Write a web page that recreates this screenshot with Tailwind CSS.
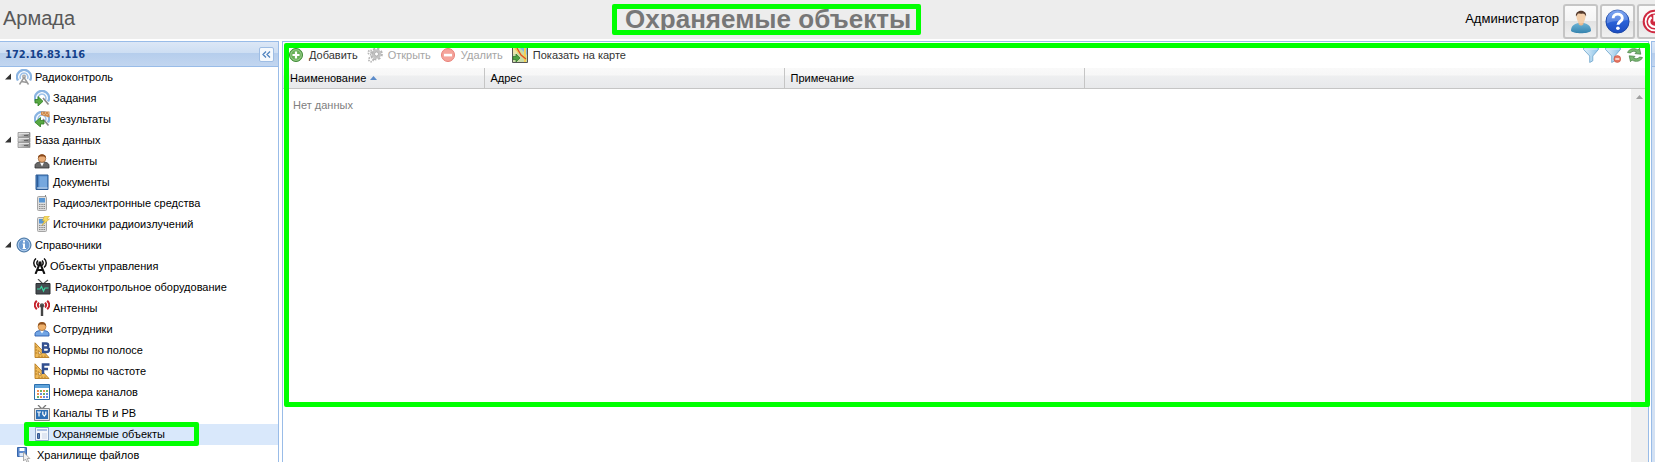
<!DOCTYPE html>
<html lang="ru">
<head>
<meta charset="utf-8">
<title>Армада</title>
<script src="https://cdn.jsdelivr.net/npm/@tailwindcss/browser@4"></script>
</head>
<body class="relative flex h-screen flex-col overflow-hidden bg-white font-['Liberation_Sans',Arial,sans-serif] text-[11px] leading-[14px] text-black">

<svg class="absolute size-0" aria-hidden="true" xmlns="http://www.w3.org/2000/svg">
  <defs>
    <linearGradient id="gHelp" x1="0" y1="0" x2="0" y2="1"><stop offset="0" stop-color="#5a8ff0"/><stop offset=".5" stop-color="#2a62d8"/><stop offset="1" stop-color="#1c4cc0"/></linearGradient>
    <linearGradient id="gShirt" x1="0" y1="0" x2="0" y2="1"><stop offset="0" stop-color="#6db4d6"/><stop offset="1" stop-color="#3583ae"/></linearGradient>
    <linearGradient id="gGray" x1="0" y1="0" x2="1" y2="0"><stop offset="0" stop-color="#d8d8d8"/><stop offset="1" stop-color="#858585"/></linearGradient>
    <linearGradient id="gFun" x1="0" y1="0" x2="1" y2="0"><stop offset="0" stop-color="#e3f1fa"/><stop offset="1" stop-color="#8cc3e8"/></linearGradient>
  </defs>
  <symbol id="waves" viewBox="0 0 16 16"><g fill="none"><path d="M2 11.500A7 7 0 1 1 14 11.500" stroke="#8ab4e2" stroke-width="2.400"/><path d="M4.500 10A4 4 0 1 1 11.500 10" stroke="#9fc3ea" stroke-width="1.600"/></g></symbol>
  <symbol id="radio" viewBox="0 0 16 16"><use href="#waves"/><circle cx="8" cy="7.500" r="1.700" fill="#bbb" stroke="#888" stroke-width=".5"/><path d="M8 8.500L3.500 15.500M8 8.500L12.500 15.500M5.500 12.500L11 13.500" stroke="#999" stroke-width="1.400" fill="none"/></symbol>
  <symbol id="task" viewBox="0 0 16 16"><use href="#waves"/><path d="M9 8l5.500 6.500" stroke="#888" stroke-width="1.600"/><path d="M1 9.500h3V6.500l5 4.800L4 16v-3H1z" fill="#58a843" stroke="#2f7d22" stroke-width=".8"/></symbol>
  <symbol id="result" viewBox="0 0 16 16"><use href="#waves"/><path d="M7 .5h8.500v6L7 4z" fill="#cf8a4c"/><path d="M8 1.500h1v1H8zm3 0h1v1h-1zm3 0h1v1h-1zM9.500 3h1v1h-1zm3 0h1v1h-1z" fill="#f5d3ac"/><path d="M9 8l5.500 6.500" stroke="#888" stroke-width="1.600"/><path d="M10 9.500H6.500V6.500L1 11.300 6.500 16v-3H10z" fill="#58a843" stroke="#2f7d22" stroke-width=".8"/></symbol>
  <symbol id="db" viewBox="0 0 16 16"><path d="M2 .5h12v4.500H2zM2 5.500h12v4.500H2zM2 10.500h12v5H2z" fill="url(#gGray)" stroke="#8a8a8a" stroke-width=".7"/><path d="M3 1.500h10M3 6.500h10M3 11.500h10" stroke="#e2e2e2"/><path d="M8 3.500h4M8 8.500h4M8 13.500h4" stroke="#666"/></symbol>
  <symbol id="client" viewBox="0 0 16 16"><path d="M1 15v-2.500C1 10 4 9 8 9s7 1 7 3.500V15z" fill="#686868" stroke="#333" stroke-width=".8"/><path d="M6 9.500l2 4 2-4z" fill="#fff"/><circle cx="8" cy="5.500" r="3.800" fill="#e9ad78" stroke="#8a5020" stroke-width=".6"/><path d="M4 5C3.500 0 12.500 0 12 5L10 3.500H6z" fill="#8a4a1c"/></symbol>
  <symbol id="staff" viewBox="0 0 16 16"><path d="M1 15v-2C1 10.500 4 9.500 8 9.500s7 1 7 3.500v2z" fill="#72a5e4" stroke="#2d5fae" stroke-width=".9"/><path d="M6 9.500l2 3 2-3z" fill="#fff"/><circle cx="8" cy="5.500" r="4" fill="#eeb06a" stroke="#a86524" stroke-width=".6"/><path d="M4 5C3.300-.3 12.700-.3 12 5L10 3.500H6z" fill="#8e511f"/></symbol>
  <symbol id="book" viewBox="0 0 16 16"><path d="M2 1h12v14.500H2z" fill="#5b91cf" stroke="#2b5a94"/><path d="M3.500 1v14" stroke="#2d5c98" stroke-width="1.500"/><path d="M5.500 2.500H13V13H5.500z" fill="#76a8de"/><path d="M3 14h10.500" stroke="#dce8f4"/></symbol>
  <symbol id="phone" viewBox="0 0 16 16"><rect x="3.500" y="1.500" width="9" height="14" rx="1" fill="#ddd" stroke="#a5a5a5"/><path d="M11.500 0v2" stroke="#888"/><path d="M5 3h6v4.500H5z" fill="#5796d4"/><path d="M5 9h1.500v1H5zm2.300 0h1.500v1H7.300zm2.200 0H11v1H9.500zM5 11h1.500v1H5zm2.300 0h1.500v1H7.300zm2.200 0H11v1H9.500zM5 13h1.500v1H5zm2.300 0h1.500v1H7.300zm2.200 0H11v1H9.500z" fill="#8a8a8a"/></symbol>
  <symbol id="phonez" viewBox="0 0 16 16"><use href="#phone"/><path d="M10.500 0h5L13 3h2.500L8 9.500l2.500-4.800H8.500z" fill="#f6db63" stroke="#caa32c" stroke-width=".5"/></symbol>
  <symbol id="info" viewBox="0 0 16 16"><circle cx="8" cy="8" r="7" fill="#6c9bd2" stroke="#43719f"/><circle cx="8" cy="8" r="5.800" fill="none" stroke="#c5daf1" stroke-width=".8"/><path d="M7 3.500h2v2H7zM6.500 6.500H9V11h1v1H6.500v-1H7V7.500h-.5z" fill="#fff"/></symbol>
  <symbol id="tower" viewBox="0 0 14 16"><g fill="none" stroke="#111" stroke-width="1.500"><path d="M3 .5C0 3 0 7 3 9.500M11 .5c3 2.500 3 6.500 0 9M5 2.500c-1.400 1.500-1.400 3.500 0 5M9 2.500c1.400 1.500 1.400 3.500 0 5"/><path d="M7 5L2.500 16M7 5l4.500 11M4.500 12h5" stroke-width="2"/></g><circle cx="7" cy="5" r="1.700" fill="#111"/></symbol>
  <symbol id="scope" viewBox="0 0 16 16"><path d="M3 0l5 5 5-4" stroke="#555" fill="none" stroke-width="1.200"/><path d="M1 4.500h14V15H1z" fill="#454b50" stroke="#2c3033"/><path d="M2 10h3l1.500-2.500L8.500 12 10 9h3.500" fill="none" stroke="#3cd5a0" stroke-width="1.200"/></symbol>
  <symbol id="ant" viewBox="0 0 16 16"><path d="M2.800.8C0 3.500 0 6.500 2.800 9.200M13.200.8c2.800 2.700 2.800 5.700 0 8.400M5 2.600c-1.500 1.600-1.500 3.300 0 4.900M11 2.600c1.500 1.600 1.500 3.300 0 4.900" fill="none" stroke="#c5232c" stroke-width="2"/><circle cx="8" cy="5.500" r="2.200" fill="#555"/><path d="M8 5v11" stroke="#444" stroke-width="2.400"/></symbol>
  <symbol id="ruler" viewBox="0 0 16 16"><path fill-rule="evenodd" d="M1 .8l14 14.700H1zM4.300 8.500V12h3.400z" fill="#f0ba58" stroke="#b57b20" stroke-width=".9"/><path d="M1.500 5H3M1.500 8H3M1.500 11H3M5 15v-1.500M8 15v-1.500M11 15v-1.500" stroke="#8f5c10" stroke-width=".7"/></symbol>
  <symbol id="normb" viewBox="0 0 16 16"><use href="#ruler"/><path d="M9 1.500h3.200a1.800 1.800 0 0 1 0 4H9zM9 5.500h3.800a2 2 0 0 1 0 4.500H9z" fill="none" stroke="#324f8f" stroke-width="2.300"/></symbol>
  <symbol id="normf" viewBox="0 0 16 16"><use href="#ruler"/><path d="M9 11V1.500h6.500M9 6h5" fill="none" stroke="#324f8f" stroke-width="2.600"/></symbol>
  <symbol id="cal" viewBox="0 0 16 16"><path d="M.5.500h15v15H.5z" fill="#fff" stroke="#2b6fae"/><path d="M1 1h14v3H1z" fill="#5fa3da"/><path d="M3 6h2v2H3zm6 0h2v2H9zM3 9h2v2H3zm3 3h2v2H6z" fill="#ee8d50"/><path d="M6 6h2v2H6zm6 0h2v2h-2zM9 9h2v2H9zM3 12h2v2H3z" fill="#6fb062"/><path d="M6 9h2v2H6zm6 0h2v2h-2zM9 12h2v2H9zm3 0h2v2h-2z" fill="#6c8be0"/></symbol>
  <symbol id="tv" viewBox="0 0 16 16"><path d="M4 0l4 4 4-4" stroke="#777" fill="none" stroke-width="1.300"/><path d="M.5 3.500h15v12H.5z" fill="#e5e5e5" stroke="#888"/><path d="M2 5h12v9H2z" fill="#2d70b6"/><path d="M3 7h4M5 7v4.500M8.800 6.500v2.800L10.300 11l1.500-1.700V6.500" stroke="#fff" stroke-width="1.200" fill="none"/></symbol>
  <symbol id="form" viewBox="0 0 16 16"><path d="M1.500 1.500h13v13h-13z" fill="#f4f7fb" stroke="#8ba4c8"/><path d="M3 3h10v2H3z" fill="#a9bfe2"/><path d="M3.500 7.500h2v5h-2z" fill="#5c82bc" stroke="#35568e"/><path d="M8 7h5v6H8z" fill="#dfe6f2"/></symbol>
  <symbol id="disk" viewBox="0 0 16 16"><path d="M.5.500h9v9h-9z" fill="#5c8ace" stroke="#3666ab"/><path d="M2.500 1h5v3h-5z" fill="#fff"/><path d="M2.500 6h5v3.500h-5z" fill="#dfe9f6"/><path d="M6.500 5v9l2-2 1.500 3.500 1.700-.8-1.500-3.200h2.600z" fill="#f0f0f0" stroke="#999" stroke-width=".8"/></symbol>
  <symbol id="add" viewBox="0 0 16 16"><circle cx="8" cy="8" r="6.500" fill="#68b057" stroke="#3f8a36"/><circle cx="8" cy="8" r="5.300" fill="none" stroke="#a5d49a" stroke-width=".8"/><path d="M8 4.500v7M4.500 8h7" stroke="#fff" stroke-width="2.200"/></symbol>
  <symbol id="gear" viewBox="0 0 16 16"><g fill="none" stroke="#b5b5b5"><circle cx="9.500" cy="7" r="5.300" stroke-width="2.200" stroke-dasharray="2.200 1.960"/><circle cx="9.500" cy="7" r="3.400" stroke="#c4c4c4" stroke-width="2.800"/><circle cx="9.500" cy="7" r="2" stroke="#a0a0a0" stroke-width=".7"/><circle cx="3.500" cy="5.500" r="2.200" stroke-width="1.800" stroke-dasharray="1.400 .9"/><circle cx="4" cy="12.500" r="2.200" stroke-width="1.800" stroke-dasharray="1.400 .9"/></g></symbol>
  <symbol id="del" viewBox="0 0 16 16"><circle cx="8" cy="8" r="6.500" fill="#f5a49b" stroke="#e98078"/><path d="M4 6.800h8v2.600H4z" fill="#fff"/></symbol>
  <symbol id="map" viewBox="0 0 16 16"><path d="M.5.500h15v15H.5z" fill="#c9dba8" stroke="#555"/><path d="M8 1h7v7z" fill="#86b8e4"/><path d="M1 1h4v6H1z" fill="#e9e5a8"/><path d="M3 1l11 12M13 1v14" stroke="#f5cf55" stroke-width="2"/><path d="M5 1l4 7 5 4" stroke="#d94a2c" fill="none" stroke-width="1.200"/><path d="M1 9.500h3V7L8 11l-4 4v-2.500H1z" fill="#4ca040" stroke="#2c7526" stroke-width=".7"/></symbol>
  <symbol id="filter" viewBox="0 0 16 16"><path d="M.6.800h14.800v1.700L9.800 9v4.800L6.700 15.500V9L.6 2.500z" fill="url(#gFun)" stroke="#69a3cc" stroke-width=".8"/><path d="M1.500 2h13" stroke="#d9ebf7" stroke-width="1.200"/></symbol>
  <symbol id="unfilter" viewBox="0 0 16 16"><use href="#filter"/><circle cx="12.300" cy="12" r="3.400" fill="#e67864" stroke="#c44e3c" stroke-width=".6"/><path d="M10.300 12h4" stroke="#fff" stroke-width="1.300"/></symbol>
  <symbol id="refresh" viewBox="0 0 16 16"><g fill="#79b871" stroke="#3e7a3c" stroke-width=".7"><path d="M.6 5.500C2 1.500 7.500.6 11 3l1.500-1.700 1.300 5.900-5.800-.6 1.500-1.600C7.500 3.800 4.500 4 3.500 6z"/><path d="M15.400 10.500C14 14.500 8.500 15.400 5 13l-1.500 1.700L2.200 8.800l5.800.6L6.500 11c2 1.200 5 1 6-1z"/></g></symbol>
</svg>

<header class="flex h-[39px] shrink-0 items-start bg-[#ededed] pl-[3px]">
  <div class="pt-[6px] text-[20px] leading-6 text-[#585858]">Армада</div>
  <h1 class="flex-1 pt-1 pr-1 text-center text-[26px] leading-[30px] font-bold text-[#777]">Охраняемые объекты</h1>
  <div class="pt-[10px] pr-1 text-[13px] leading-[18px]">Администратор</div>
  <div class="flex w-[92px] shrink-0 gap-[2px] overflow-hidden pt-1">
    <button aria-label="Профиль" class="flex size-[35px] shrink-0 items-center justify-center rounded-[3px] border-2 border-[#c5c5c5] bg-[linear-gradient(#fbfbfb_0%,#f4f4f4_48%,#e3e3e3_50%,#f0f0f0_100%)]">
      <svg class="h-6 w-[22px] shrink-0" viewBox="0 0 22 24"><path d="M1 21c0-5 3-7 7-8h6c4 1 7 3 7 8-3 3-17 3-20 0z" fill="url(#gShirt)"/><path d="M8.500 11h5v3c-1.500 2-3.500 2-5 0z" fill="#e8b98f"/><path d="M6.500 6c0-5 9-5 9 0 0 4-2 7.500-4.500 7.500S6.500 10 6.500 6z" fill="#f3cfab"/><path d="M6 6.500C4.500-1 17.500-1.500 16 6.500c-1-2-1-2.500-3-3-2 .5-4 0-5 0z" fill="#553a2c"/></svg>
    </button>
    <button aria-label="Справка" class="flex size-[35px] shrink-0 items-center justify-center rounded-[3px] border-2 border-[#c5c5c5] bg-[linear-gradient(#fbfbfb_0%,#f4f4f4_48%,#e3e3e3_50%,#f0f0f0_100%)]">
      <svg class="size-[25px] shrink-0" viewBox="0 0 26 26"><circle cx="13" cy="13" r="12" fill="url(#gHelp)" stroke="#1d49a8"/><path d="M2 11a11 11 0 0 1 22 0c-6 3-14 0-22 4z" fill="#fff" opacity=".22"/><path d="M8.500 9.500c0-5.500 9.500-5.500 9.500 0 0 3.500-4.500 3.500-4.500 7" fill="none" stroke="#fff" stroke-width="3"/><circle cx="13.400" cy="20" r="1.900" fill="#fff"/></svg>
    </button>
    <button aria-label="Выход" class="flex size-[35px] shrink-0 items-center justify-center rounded-[3px] border-2 border-[#c5c5c5] bg-[linear-gradient(#fbfbfb_0%,#f4f4f4_48%,#e3e3e3_50%,#f0f0f0_100%)]">
      <svg class="size-[25px] shrink-0" viewBox="0 0 26 26"><circle cx="13" cy="13" r="12.300" fill="#cf2940"/><circle cx="13" cy="13" r="9.300" fill="none" stroke="#fff" stroke-width="1.800"/><path d="M10 8.500a5.500 5.500 0 1 0 6 0M13 6v7" fill="none" stroke="#fff" stroke-width="2.400"/></svg>
    </button>
  </div>
</header>

<div class="mt-[2px] flex min-h-0 flex-1 gap-[3px]">
  <aside class="flex w-[279px] shrink-0 flex-col border-t border-r border-[#99bce8]">
    <div class="flex h-[25px] shrink-0 items-center justify-between border-b border-[#99bce8] bg-[linear-gradient(#dce7f6_0%,#cddef3_45%,#b5cdec_46%,#c2d6f0_100%)] pt-px pr-1 pl-[5px]">
      <h2 class="pt-px font-['DejaVu_Sans_Condensed','Noto_Sans',sans-serif] text-[11px] font-bold text-[#15428b]">172.16.83.116</h2>
      <button aria-label="Свернуть" class="flex size-[15px] items-center justify-center rounded-[2px] border border-[#9ebde4] bg-[#f5f9fd]">
        <svg class="h-[7px] w-[9px]" viewBox="0 0 9 7"><path d="M4 .5l-3 3 3 3M8 .5l-3 3 3 3" fill="none" stroke="#4f83bf" stroke-width="1.300"/></svg>
      </button>
    </div>
    <nav aria-label="Разделы">
      <ul class="[&_a]:flex [&_a]:h-[21px] [&_a]:items-center [&_a]:gap-[3px] [&_a]:pb-[2px] [&_svg]:shrink-0">
        <li><a href="#" class="pl-[5px]"><svg class="mr-px size-[7px]" viewBox="0 0 7 7"><path d="M6 .5v6H0z" fill="#333"/></svg><svg class="size-4"><use href="#radio"/></svg>Радиоконтроль</a></li>
        <li><a href="#" class="pl-[34px]"><svg class="size-4"><use href="#task"/></svg>Задания</a></li>
        <li><a href="#" class="pl-[34px]"><svg class="size-4"><use href="#result"/></svg>Результаты</a></li>
        <li><a href="#" class="pl-[5px]"><svg class="mr-px size-[7px]" viewBox="0 0 7 7"><path d="M6 .5v6H0z" fill="#333"/></svg><svg class="size-4"><use href="#db"/></svg>База данных</a></li>
        <li><a href="#" class="pl-[34px]"><svg class="size-4"><use href="#client"/></svg>Клиенты</a></li>
        <li><a href="#" class="pl-[34px]"><svg class="size-4"><use href="#book"/></svg>Документы</a></li>
        <li><a href="#" class="pl-[34px]"><svg class="size-4"><use href="#phone"/></svg>Радиоэлектронные средства</a></li>
        <li><a href="#" class="pl-[34px]"><svg class="size-4"><use href="#phonez"/></svg>Источники радиоизлучений</a></li>
        <li><a href="#" class="pl-[5px]"><svg class="mr-px size-[7px]" viewBox="0 0 7 7"><path d="M6 .5v6H0z" fill="#333"/></svg><svg class="size-4"><use href="#info"/></svg>Справочники</a></li>
        <li><a href="#" class="pl-[33px]"><svg class="h-4 w-[14px]"><use href="#tower"/></svg>Объекты управления</a></li>
        <li><a href="#" class="pl-[35px]"><svg class="mr-px size-4"><use href="#scope"/></svg>Радиоконтрольное оборудование</a></li>
        <li><a href="#" class="pl-[34px]"><svg class="size-4"><use href="#ant"/></svg>Антенны</a></li>
        <li><a href="#" class="pl-[34px]"><svg class="size-4"><use href="#staff"/></svg>Сотрудники</a></li>
        <li><a href="#" class="pl-[34px]"><svg class="size-4"><use href="#normb"/></svg>Нормы по полосе</a></li>
        <li><a href="#" class="pl-[34px]"><svg class="size-4"><use href="#normf"/></svg>Нормы по частоте</a></li>
        <li><a href="#" class="pl-[34px]"><svg class="size-4"><use href="#cal"/></svg>Номера каналов</a></li>
        <li><a href="#" class="pl-[34px]"><svg class="size-4"><use href="#tv"/></svg>Каналы ТВ и РВ</a></li>
        <li class="relative bg-[#d9e8fb]"><a href="#" aria-current="page" class="pl-[34px]"><svg class="size-4"><use href="#form"/></svg>Охраняемые объекты</a><span class="pointer-events-none absolute -top-[2px] left-6 h-6 w-[175px] rounded-[2px] border-[5px] border-[#00ff00]"></span></li>
        <li><a href="#" class="pl-[17px]"><svg class="mr-px size-4"><use href="#disk"/></svg>Хранилище файлов</a></li>
      </ul>
    </nav>
  </aside>

  <main class="relative flex min-w-0 flex-1 flex-col border-x border-t border-[#99bce8]">
    <div class="flex h-[26px] shrink-0 items-center pr-[5px] pl-[5px] text-[#333] [&_button]:flex [&_button]:items-center [&_button]:gap-[5px]">
      <button><svg class="size-4"><use href="#add"/></svg>Добавить</button>
      <button disabled class="ml-[9px] text-[#a5a5a5]"><svg class="size-4"><use href="#gear"/></svg>Открыть</button>
      <button disabled class="ml-[9px] text-[#a5a5a5]"><svg class="size-4"><use href="#del"/></svg>Удалить</button>
      <button class="ml-[9px]"><svg class="size-4"><use href="#map"/></svg>Показать на карте</button>
      <div class="ml-auto flex gap-[6px]">
        <button aria-label="Фильтр"><svg class="size-4"><use href="#filter"/></svg></button>
        <button aria-label="Сбросить фильтр"><svg class="size-4"><use href="#unfilter"/></svg></button>
        <button aria-label="Обновить"><svg class="size-4"><use href="#refresh"/></svg></button>
      </div>
    </div>
    <table class="w-full shrink-0 table-fixed border-collapse text-left">
      <thead>
        <tr class="h-5 bg-[linear-gradient(#f9f9f9_0%,#f7f7f7_35%,#eeeff0_40%,#e8e9eb_100%)] [&_th]:border-b [&_th]:border-[#c5c5c5] [&_th]:p-0 [&_th]:font-normal">
          <th scope="col" class="w-[201px] border-r"><span class="flex items-center gap-1 pl-[7px]">Наименование<svg class="h-1 w-[7px]" viewBox="0 0 7 4"><path d="M3.500 0L7 4H0z" fill="#5b8bc9"/></svg></span></th>
          <th scope="col" class="w-[300px] border-r"><span class="pl-[6px]">Адрес</span></th>
          <th scope="col" class="w-[300px] border-r"><span class="pl-[6px]">Примечание</span></th>
          <td class="border-b border-[#c5c5c5]"></td>
        </tr>
      </thead>
    </table>
    <div class="flex min-h-0 flex-1">
      <p class="flex-1 pt-[9px] pl-[10px] text-[#808080]">Нет данных</p>
      <div class="flex w-[17px] justify-center bg-[#f0f0f0] pt-[6px]"><svg class="h-1 w-[7px]" viewBox="0 0 7 4"><path d="M3.500 0L7 4H0z" fill="#a0a0a0"/></svg></div>
    </div>
    <div class="pointer-events-none absolute top-px -right-[2px] bottom-[55px] left-px rounded-[2px] border-[5px] border-[#00ff00]"></div>
  </main>

  <aside aria-label="Свёрнутая панель" class="-ml-px w-1 shrink-0 border-t border-l border-[#99bce8] bg-[#d3e1f3]">
    <div class="h-[25px] border-b border-[#99bce8] bg-[linear-gradient(#dce7f6_0%,#cddef3_45%,#b5cdec_46%,#c2d6f0_100%)]"></div>
  </aside>
</div>

<div class="pointer-events-none absolute top-1 left-[612px] h-[31px] w-[309px] rounded-[2px] border-[5px] border-[#00ff00]"></div>
</body>
</html>
